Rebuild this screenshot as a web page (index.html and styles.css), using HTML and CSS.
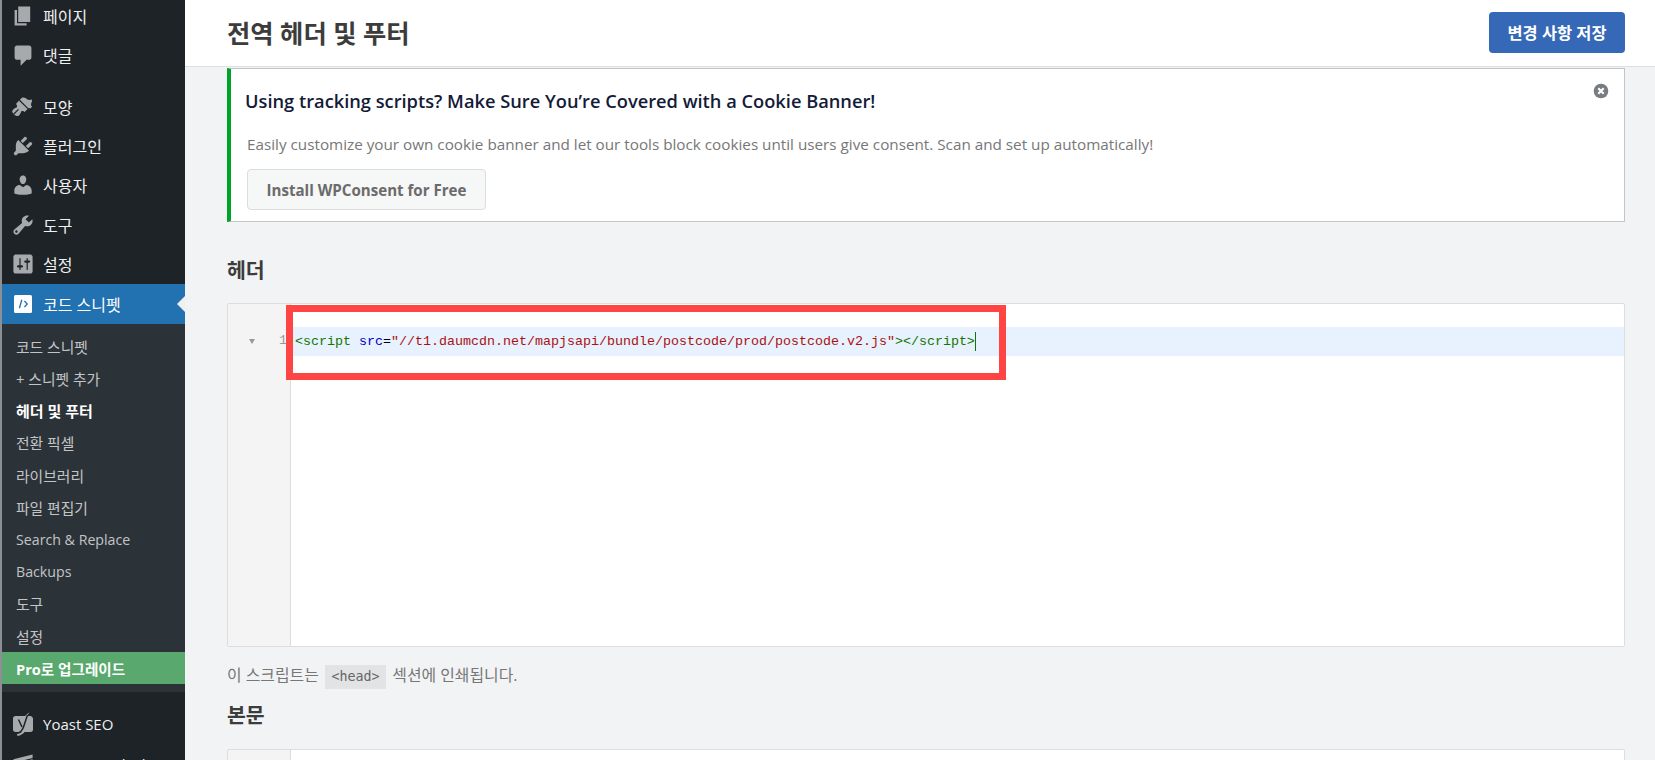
FILE: index.html
```html
<!DOCTYPE html>
<html lang="ko">
<head>
<meta charset="utf-8">
<title>전역 헤더 및 푸터</title>
<link rel="stylesheet" href="styles.css">
</head>
<body>
<div class="app">
  <aside class="sidebar">
    <ul class="menu">
      <li class="item"><svg class="ico" viewBox="0 0 20 20"><path d="M6 15V2h10v13H6zM5 16h8v2H3V5h2v11z"/></svg><span>페이지</span></li>
      <li class="item"><svg class="ico" viewBox="0 0 20 20"><path d="M5 2h10c1.100 0 2 .9 2 2v8c0 1.100-.9 2-2 2h-2l-5 5v-5H5c-1.100 0-2-.9-2-2V4c0-1.100.9-2 2-2z"/></svg><span>댓글</span></li>
      <li class="item gap"><svg class="ico" viewBox="0 0 20 20"><path d="M14.480 11.060L7.410 3.990l1.500-1.500c.5-.56 2.300-.47 3.510.32 1.210.8 1.430 1.280 2.660 1.280 1.200 0 2.110-.72 2.430.3.300.73-.84 2.740-.84 3.540 0 .8.330 1.160.9 1.640l-1.100 1.490zM6.710 4.690l7.070 7.070-2.430 2.430c-.71-.58-1.240-1.100-2.700-.75l-.95 2.120c-.33.77-1.530 2.440-2.970 1.930l-2.200-1.080 4.060-4.070-.7-.7-4.060 4.060-.83-1.820c-.18-.7.920-2.260 2.010-2.890l1.900-.86c.35-1.500-.19-2.280-.76-2.690l2.560-2.850z"/></svg><span>모양</span></li>
      <li class="item"><svg class="ico" viewBox="0 0 20 20"><path d="M13.110 4.360L9.870 7.600 8 5.730l3.240-3.240c.35-.34 1.050-.2 1.560.32.520.51.660 1.210.31 1.550zm-8 1.770l.91-1.120 9.010 9.010-1.190.84c-.71.710-2.630 1.160-3.820 1.160H6.140L4.900 17.260c-.59.590-1.540.59-2.120 0a1.500 1.500 0 0 1 0-2.120l1.240-1.240v-3.880c0-1.130.4-3.130 1.090-3.890zm7.260 3.970l3.240-3.240c.34-.35 1.040-.21 1.550.31.520.51.660 1.210.31 1.550l-3.240 3.250-1.860-1.870z"/></svg><span>플러그인</span></li>
      <li class="item"><svg class="ico" viewBox="0 0 20 20"><path d="M10 9.250c-2.270 0-2.730-3.440-2.730-3.440C7 4.020 7.820 2 9.970 2c2.160 0 2.980 2.020 2.710 3.810 0 0-.41 3.440-2.680 3.440zm0 2.570L12.720 10c2.390 0 4.520 2.330 4.520 4.530v2.490s-3.650 1.130-7.240 1.130c-3.650 0-7.240-1.130-7.240-1.130v-2.490c0-2.250 1.940-4.480 4.470-4.480z"/></svg><span>사용자</span></li>
      <li class="item"><svg class="ico" viewBox="0 0 20 20"><path d="M16.680 9.770c-1.340 1.340-3.300 1.670-4.950.99l-5.410 6.520c-.99.990-2.590.99-3.570 0-.99-.98-.99-2.580 0-3.570l6.520-5.420c-.68-1.650-.35-3.610.99-4.950 1.280-1.280 3.120-1.620 4.720-1.060l-2.890 2.890 2.820 2.820 2.860-2.870c.53 1.580.18 3.400-1.090 4.650zM3.810 16.210c.4.390 1.040.39 1.430 0 .4-.4.400-1.040 0-1.440-.39-.39-1.030-.39-1.430 0a1.040 1.040 0 0 0 0 1.440z"/></svg><span>도구</span></li>
      <li class="item"><svg class="ico" viewBox="0 0 20 20"><path d="M18 16V4c0-1.100-.9-2-2-2H4c-1.100 0-2 .9-2 2v12c0 1.100.9 2 2 2h12c1.100 0 2-.9 2-2zM8 11h1c.55 0 1 .45 1 1s-.45 1-1 1H8v1.500c0 .28-.22.5-.5.500s-.5-.22-.5-.5V13H6c-.55 0-1-.45-1-1s.45-1 1-1h1V5.500c0-.28.22-.5.5-.5s.5.220.5.500V11zm5-2h-1c-.55 0-1-.45-1-1s.45-1 1-1h1V5.500c0-.28.22-.5.5-.5s.5.220.5.500V7h1c.55 0 1 .45 1 1s-.45 1-1 1h-1v5.500c0 .28-.22.5-.5.500s-.5-.22-.5-.5V9z"/></svg><span>설정</span></li>
      <li class="item active"><svg class="ico" viewBox="0 0 20 20"><rect x="2.500" y="2.500" width="15" height="15" rx="1.300" fill="#fff"/><path d="M9 6.500 7 13.500M11.200 7.500l2.300 2.500-2.300 2.500" fill="none" stroke="#2271b1" stroke-width="1.100"/></svg><span>코드 스니펫</span></li>
      <li class="sub">
        <ul class="submenu">
          <li>코드 스니펫</li>
          <li>+ 스니펫 추가</li>
          <li class="current">헤더 및 푸터</li>
          <li>전환 픽셀</li>
          <li>라이브러리</li>
          <li>파일 편집기</li>
          <li class="latin">Search &amp; Replace</li>
          <li class="latin">Backups</li>
          <li>도구</li>
          <li>설정</li>
          <li class="upgrade">Pro로 업그레이드</li>
        </ul>
      </li>
      <li class="item gap"><svg class="ico-yoast" viewBox="0 0 22 24"><path d="M3.500 4H19l2 2v11.500c0 1.500-1 2.500-2.500 2.500h-15C2 20 1 19 1 17.500v-11C1 5 2 4 3.500 4z"/><path d="M17.500 0 15 4H13zM5 22c2.500-.5 4-1.500 5-2h2.500c-1.500 2-4 3.500-7 4z"/><path d="M6.500 7.500l3.500 7.500M15.500 3 11.500 15c-.9 2.800-2.200 4.700-5.500 6" fill="none" stroke="#1d2327" stroke-width="1.500"/></svg><span class="latin-label">Yoast SEO</span></li>
      <li class="item"><svg class="ico" viewBox="0 0 20 20"><path d="M2 6l16-4v3L2 9zM2 10l16-4v12H2z"/></svg><span class="latin-label">Generate Blocks</span></li>
    </ul>
  </aside>
  <main class="main">
    <header class="topbar">
      <h1>전역 헤더 및 푸터</h1>
      <button class="save">변경 사항 저장</button>
    </header>
    <div class="content">
      <section class="notice">
        <h3>Using tracking scripts? Make Sure You’re Covered with a Cookie Banner!</h3>
        <p>Easily customize your own cookie banner and let our tools block cookies until users give consent. Scan and set up automatically!</p>
        <button class="install">Install WPConsent for Free</button>
        <svg class="close" viewBox="0 0 16 16"><circle cx="8" cy="8" r="7.300" fill="#787c82"/><path d="M5.300 5.300l5.400 5.400M10.700 5.300l-5.400 5.400" stroke="#fff" stroke-width="2.200"/></svg>
      </section>
      <h2 class="heading">헤더</h2>
      <div class="editor">
        <div class="gutter"><span class="fold"></span><span class="num">1</span></div>
        <div class="code">
          <div class="line"><span class="tag">&lt;script</span> <span class="attr">src</span>=<span class="str">"//t1.daumcdn.net/mapjsapi/bundle/postcode/prod/postcode.v2.js"</span><span class="tag">&gt;&lt;/script&gt;</span><span class="cursor"></span></div>
        </div>
        <div class="highlight"></div>
      </div>
      <p class="hint">이 스크립트는 <code>&lt;head&gt;</code> 섹션에 인쇄됩니다.</p>
      <h2 class="heading second">본문</h2>
      <div class="editor next"><div class="gutter"></div><div class="code"></div></div>
    </div>
  </main>
</div>
</body>
</html>
```
FILE: styles.css
```css
* { box-sizing: border-box; }
html, body { margin: 0; padding: 0; height: 760px; overflow: hidden; }
body {
  background: #f0f0f1;
  font-family: "Open Sans", "Noto Sans CJK KR", sans-serif;
  font-size: 14px;
  color: #444;
}
ul { list-style: none; margin: 0; padding: 0; }
h1, h2, h3, p { margin: 0; }
.app { display: flex; height: 760px; overflow: hidden; }

.sidebar {
  flex: 0 0 185px;
  height: 760px;
  overflow: hidden;
  background: #1d2327;
  border-left: 2px solid #8c8f94;
}
.menu { margin-top: -4px; }
.item {
  position: relative;
  display: flex;
  align-items: center;
  height: 39.2px;
  padding-left: 9px;
  color: #f0f0f1;
  font-size: 16px;
}
.item span { margin-left: 8px; white-space: nowrap; }
.item .latin-label { font-size: 15px; }
.item.gap { margin-top: 13px; }
.ico { width: 24px; height: 24px; flex: none; fill: #a7aaad; }
.ico-yoast { width: 22px; height: 24px; flex: none; margin: 0 1px 0 1px; fill: #a7aaad; }
.item.active { margin-top: 0.6px; background: #2271b1; color: #fff; height: 40px; }
.item.active::after {
  content: "";
  position: absolute;
  right: 0;
  top: 12px;
  border: 8px solid transparent;
  border-right-color: #f0f0f1;
  border-left-width: 0;
}
.submenu { background: #2c3338; padding: 6.4px 0 7.4px; }
.submenu li {
  display: flex;
  align-items: center;
  height: 32.2px;
  padding-left: 14px;
  color: #c3c4c7;
  font-size: 14.8px;
  white-space: nowrap;
}
.submenu li.latin { font-size: 14.2px; }
.submenu li.current { color: #fff; font-weight: 700; font-size: 15px; }
.submenu li.upgrade { background: #59a86d; color: #fff; font-weight: 700; font-size: 14.6px; }

.main { flex: 1; min-width: 0; background: #f2f3f5; }
.topbar {
  display: flex;
  align-items: center;
  justify-content: space-between;
  height: 67px;
  padding: 0 30px 0 42px;
  background: #fff;
  border-bottom: 1px solid #dddfe2;
}
.topbar h1 { font-size: 25.3px; font-weight: 700; line-height: 1.3; color: #3c3c3c; }
.save {
  width: 136px;
  height: 41px;
  margin-top: -2px;
  background: #3568b7;
  color: #fff;
  border: 0;
  border-radius: 4px;
  font: 700 16.4px "Open Sans", "Noto Sans CJK KR", sans-serif;
}
.content { padding: 1px 30px 0 42px; }
.notice {
  position: relative;
  height: 154px;
  padding: 18px 16px 0 14px;
  background: #fff;
  border: 1px solid #c3c4c7;
  border-left: 4px solid #00a32a;
}
.notice h3 { font-size: 18.25px; font-weight: 600; line-height: 28px; color: #141b38; }
.notice p { margin: 18px 0 0 2px; font-size: 15.25px; line-height: 22px; color: #777; }
.install {
  display: block;
  margin: 14px 0 0 2px;
  width: 239px;
  height: 41px;
  background: #f6f7f7;
  color: #6b6b6b;
  border: 1px solid #dcdcde;
  border-radius: 4px;
  font: 700 15.1px "Open Sans", sans-serif;
}
.close { position: absolute; top: 14px; right: 15px; width: 16px; height: 16px; }

.heading { font-size: 20.5px; font-weight: 700; line-height: 28px; color: #3c3c3c; }
.content > .heading { margin-top: 34px; }
.editor {
  position: relative;
  display: flex;
  margin-top: 19px;
  height: 344px;
  background: #fff;
  border: 1px solid #dddddd;
  border-radius: 2px;
}
.gutter {
  position: relative;
  flex: 0 0 63px;
  background: #f4f4f4;
  border-right: 1px solid #dddddd;
}
.fold {
  position: absolute;
  left: 21px;
  top: 35px;
  border: 3.500px solid transparent;
  border-top: 5px solid #999;
  border-bottom: 0;
}
.num {
  position: absolute;
  right: 3px;
  top: 27px;
  font: 13.33px/20px "Liberation Mono", monospace;
  color: #999;
}
.code { position: relative; flex: 1; padding-top: 23px; }
.line {
  position: relative;
  height: 29px;
  padding-left: 4px;
  background: #e8f2fe;
  font: 13.33px/29px "Liberation Mono", monospace;
  color: #000;
  white-space: pre;
}
.tag { color: #117700; }
.attr { color: #0000cc; }
.str { color: #aa1111; }
.cursor {
  position: absolute;
  display: inline-block;
  width: 1px;
  height: 19px;
  top: 5px;
  background: #117700;
}
.highlight {
  position: absolute;
  left: 58px;
  top: 1px;
  width: 720px;
  height: 75px;
  border: 7px solid #ff4444;
  pointer-events: none;
}
.hint { margin-top: 15px; font-size: 15.9px; line-height: 26px; color: #777; }
.hint code {
  display: inline-block;
  padding: 0 6.5px;
  margin: 0 2px;
  background: #e2e3e5;
  font: 13.33px/24px "DejaVu Sans Mono", monospace;
  color: #666;
}
.content > .second { margin-top: 12px; }
.next { margin-top: 20px; }
```
